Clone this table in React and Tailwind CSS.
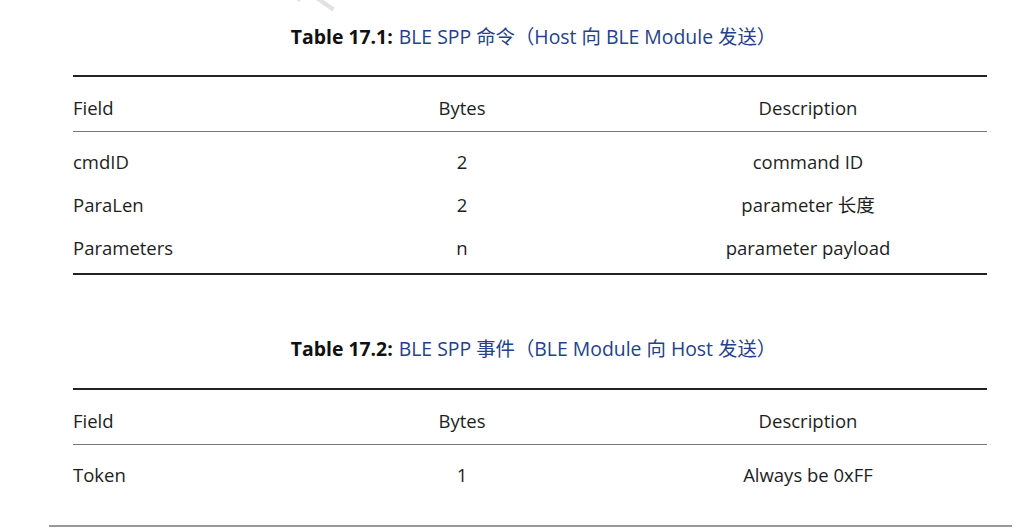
import React from 'react';

const font = { fontFamily: '"Open Sans", "Noto Sans CJK SC", sans-serif' };

const Caption = ({ num, children }) => (
  <div className="flex h-[24px] items-center justify-center pl-[44px] text-[19.4px] leading-[24px]">
    <span className="font-bold text-[#111]">Table {num}:</span>
    <span className="ml-[6px] text-[#24418c]">{children}</span>
  </div>
);

const Row = ({ cells, header }) => (
  <div className={`grid grid-cols-[222px_334px_358px] items-center ${header ? 'h-[54px] pt-[8px]' : 'h-[43px]'}`}>
    <div className="text-left">{cells[0]}</div>
    <div className="text-center">{cells[1]}</div>
    <div className="text-center">{cells[2]}</div>
  </div>
);

const DataTable = ({ rows, closed }) => (
  <div className="ml-[73px] w-[914px] text-[18.5px] text-[#1e1e1e]">
    <div className="border-t-2 border-[#222]" />
    <Row header cells={['Field', 'Bytes', 'Description']} />
    <div className="border-t border-[#777]" />
    <div className="pt-[8px] pb-[4px]">
      {rows.map((r, i) => (
        <Row key={i} cells={r} />
      ))}
    </div>
    {closed && <div className="border-t-2 border-[#222]" />}
  </div>
);

export default function App() {
  return (
    <div className="relative h-[530px] w-[1023px] overflow-hidden bg-white" style={font}>
      <span className="pointer-events-none absolute left-[298px] top-[-38px] -rotate-[55deg] text-[50px] leading-none text-[#e2e2e2]">
        Te
      </span>

      <div className="pt-[25px]">
        <Caption num="17.1">BLE SPP 命令（Host 向 BLE Module 发送）</Caption>
      </div>
      <div className="mt-[26px]">
        <DataTable
          closed
          rows={[
            ['cmdID', '2', 'command ID'],
            ['ParaLen', '2', 'parameter 长度'],
            ['Parameters', 'n', 'parameter payload'],
          ]}
        />
      </div>

      <div className="mt-[62px]">
        <Caption num="17.2">BLE SPP 事件（BLE Module 向 Host 发送）</Caption>
      </div>
      <div className="mt-[27px]">
        <DataTable rows={[['Token', '1', 'Always be 0xFF']]} />
      </div>

      <div className="ml-[49px] mt-[25px] w-[963px] border-t-2 border-[#999]" />
    </div>
  );
}
